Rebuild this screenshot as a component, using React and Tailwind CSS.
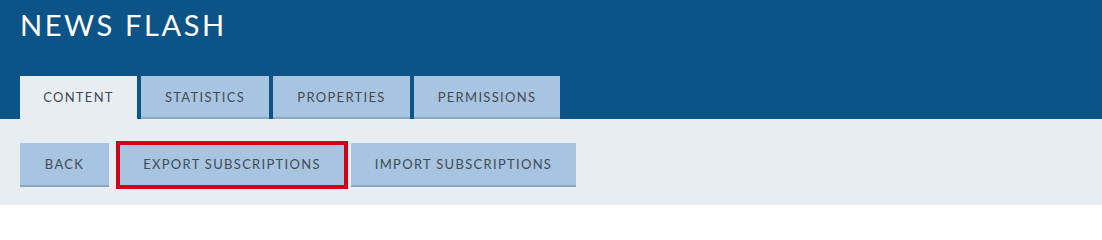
const tabs = [
  { label: "CONTENT", width: "w-[117px]" },
  { label: "STATISTICS", width: "w-[128px]" },
  { label: "PROPERTIES", width: "w-[137px]" },
  { label: "PERMISSIONS", width: "w-[146px]" },
];

export default function App() {
  return (
    <div className="h-[205px] w-[1102px] bg-[#e8edf1] font-['Lato',sans-serif]">
      <header className="bg-[#0c5487] px-5">
        <h1 className="pt-[7px] text-[29px] leading-[36px] tracking-[2.6px] text-white">NEWS FLASH</h1>
        <nav className="mt-[33px] flex gap-1">
          {tabs.map((tab, i) => (
            <div
              key={tab.label}
              className={
                i === 0
                  ? `flex h-[43px] ${tab.width} items-center justify-center bg-[#e8edf1] text-[13px] tracking-[1.3px] text-[#444b55]`
                  : `flex h-[43px] ${tab.width} items-center justify-center border-b-2 border-[#8ba6c3] bg-[#a7c4e1] pt-[2px] text-[13px] tracking-[1.3px] text-[#444b55]`
              }
            >
              {tab.label}
            </div>
          ))}
        </nav>
      </header>

      <div className="flex px-5 pt-6">
        <button className="h-[44px] w-[89px] border-b-2 border-[#8ba6c3] bg-[#a7c4e1] pt-[2px] text-[13px] tracking-[1.3px] text-[#444b55]">
          BACK
        </button>
        <button className="ml-[9px] h-[44px] w-[228px] border-b-2 border-[#8ba6c3] bg-[#a7c4e1] pt-[2px] text-[13px] tracking-[1.3px] text-[#444b55] outline-4 outline-offset-[-2px] outline-[#d0021b]">
          EXPORT SUBSCRIPTIONS
        </button>
        <button className="ml-[5px] h-[44px] w-[225px] border-b-2 border-[#8ba6c3] bg-[#a7c4e1] pt-[2px] text-[13px] tracking-[1.3px] text-[#444b55]">
          IMPORT SUBSCRIPTIONS
        </button>
      </div>
    </div>
  );
}
